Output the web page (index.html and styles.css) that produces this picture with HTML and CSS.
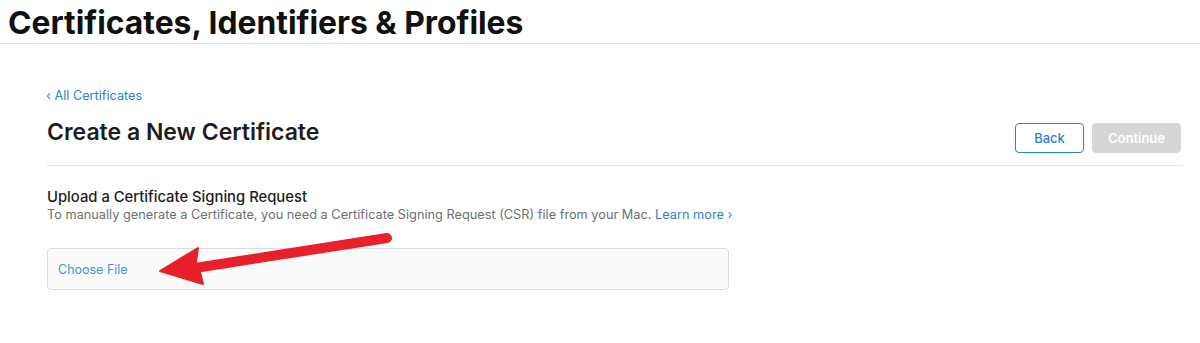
FILE: index.html
```html
<!DOCTYPE html>
<html lang="en">
  <head>
    <meta charset="UTF-8">
    <meta name="viewport" content="width=device-width, initial-scale=1.0">
    <link rel="stylesheet" href="styles.css">
    <title>Certificates, Identifiers &amp; Profiles</title>
  </head>
  <body>
    <header class="masthead">
      <h1 class="masthead-title">Certificates, Identifiers &amp; Profiles</h1>
    </header>
    <main class="content">
      <a class="back-link" href="#">&lsaquo; All Certificates</a>
      <div class="page-head">
        <h2 class="page-title">Create a New Certificate</h2>
        <div class="actions">
          <button class="btn btn-outline">Back</button>
          <button class="btn btn-disabled" disabled>Continue</button>
        </div>
      </div>
      <section class="upload">
        <h3 class="upload-title">Upload a Certificate Signing Request</h3>
        <p class="upload-desc">To manually generate a Certificate, you need a Certificate Signing Request (CSR) file from your Mac. <a href="#">Learn more &rsaquo;</a></p>
        <div class="file-box">
          <span class="file-choose">Choose File</span>
        </div>
      </section>
    </main>
    <!-- annotation arrow drawn over the form -->
    <svg class="arrow" width="250" height="70" viewBox="0 0 250 70">
      <line x1="237" y1="13" x2="45" y2="43" stroke="#e8202a" stroke-width="10" stroke-linecap="round"/>
      <polygon points="10,46 48,23 46,37 50,47 53,59" fill="#e8202a" stroke="#e8202a" stroke-width="2" stroke-linejoin="round"/>
    </svg>
  </body>
</html>
```

FILE: styles.css
```css
:root {
--text: #1d1d1f;
--muted: #6e6e73;
--link: #2f7fd4;
--line: #e2e2e2;
}
* {
margin: 0;
padding: 0;
box-sizing: border-box;
}
body {
position: relative;
font-family: Inter, "Noto Sans", sans-serif;
color: var(--text);
background: #fff;
}
a {
color: var(--link);
text-decoration: none;
}
.masthead {
padding: 3px 0 0 8px;
border-bottom: 1px solid var(--line);
}
.masthead-title {
font-size: 31.8px;
line-height: 40px;
font-weight: 700;
color: #111;
}
.content {
padding: 0 17px 0 47px;
}
.back-link {
display: block;
margin-top: 43px;
margin-left: -1px;
font-size: 12.7px;
line-height: 18px;
}
.page-head {
display: flex;
justify-content: space-between;
align-items: flex-end;
padding-bottom: 12px;
border-bottom: 1px solid var(--line);
}
.page-title {
font-size: 23px;
line-height: 28px;
font-weight: 600;
margin-top: 13px;
margin-bottom: 7px;
}
.actions {
display: flex;
gap: 8px;
margin-right: 2px;
}
.btn {
height: 30px;
border-radius: 4px;
font-family: inherit;
font-size: 13px;
font-weight: 500;
}
.btn-outline {
width: 69px;
background: #fff;
border: 1px solid var(--link);
color: var(--link);
cursor: pointer;
}
.btn-disabled {
width: 89px;
background: #d6d6d6;
border: 1px solid #d6d6d6;
color: #fff;
font-weight: 600;
}
.upload {
padding-top: 22px;
}
.upload-title {
font-size: 14.8px;
line-height: 18px;
font-weight: 500;
}
.upload-desc {
font-size: 12.75px;
line-height: 18px;
color: var(--muted);
}
.file-box {
width: 682px;
height: 42px;
margin-top: 24px;
padding: 0 10px;
display: flex;
align-items: center;
background: #fafafa;
border: 1px solid #dcdcdc;
border-radius: 4px;
}
.file-choose {
font-size: 12.5px;
color: #4d8fd6;
}
.arrow {
position: absolute;
left: 150px;
top: 225px;
display: block;
z-index: 2;
}
```
